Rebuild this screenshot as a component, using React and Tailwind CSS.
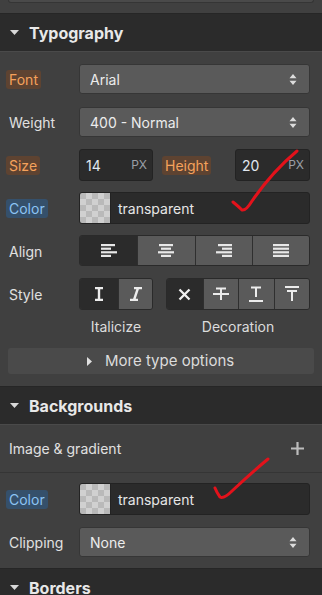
import React from "react";

const font = { fontFamily: "Inter, 'Noto Sans', sans-serif" };

function SectionHeader({ title }) {
  return (
    <div className="flex h-[39px] items-center gap-[10px] border-y border-t-[#262626] border-b-[#4a4a4a] bg-[#2b2b2b] pl-[10px]">
      <svg width="9" height="5" viewBox="0 0 9 5">
        <path d="M0 0h9L4.5 5z" fill="#d9d9d9" />
      </svg>
      <span className="text-[16px] font-bold text-[#e8e8e8]">{title}</span>
    </div>
  );
}

function Label({ children, tone }) {
  const toneClass =
    tone === "orange"
      ? "bg-[#5e4331] text-[#f5a25c]"
      : tone === "blue"
      ? "bg-[#35506b] text-[#8cc4f4]"
      : "text-[#e0e0e0]";
  return (
    <span className={`rounded-[3px] px-[3px] py-[1px] text-[14px] leading-[19px] ${toneClass}`}>
      {children}
    </span>
  );
}

function UpDown() {
  return (
    <svg width="8" height="11" viewBox="0 0 8 11">
      <path d="M4 0L7.5 4.2H0.5z M4 11L7.5 6.8H0.5z" fill="#dcdcdc" />
    </svg>
  );
}

function Select({ value }) {
  return (
    <div className="flex h-[30px] flex-1 items-center justify-between rounded-[3px] border border-[#363636] bg-[#5a5a5a] pl-[10px] pr-[12px] text-[14px] text-[#ececec]">
      <span>{value}</span>
      <UpDown />
    </div>
  );
}

function Row({ label, tone, children }) {
  return (
    <div className="flex items-center">
      <div className="w-[73px] shrink-0">
        <Label tone={tone}>{label}</Label>
      </div>
      {children}
    </div>
  );
}

function NumInput({ value, w }) {
  return (
    <div className={`flex h-[32px] ${w} items-center justify-between rounded-[3px] border border-[#232323] bg-[#2b2b2b] pl-[6px] pr-[5px]`}>
      <span className="text-[14px] text-[#e2e8f0]">{value}</span>
      <span className="text-[12px] text-[#9a9fa6]">PX</span>
    </div>
  );
}

function ColorField() {
  return (
    <div className="flex h-[32px] flex-1 items-center overflow-hidden rounded-[3px] border border-[#232323] bg-[#2b2b2b]">
      <div className="h-full w-[31px] border-r border-[#232323] bg-[repeating-conic-gradient(#d0d0d0_0_25%,#b9b9b9_0_50%)] bg-[length:12px_12px]" />
      <span className="pl-[7px] text-[14px] text-[#e6e6e6]">transparent</span>
    </div>
  );
}

function Lines({ rows }) {
  return (
    <svg width="16" height="14" viewBox="0 0 16 14">
      {rows.map(([x, w], i) => (
        <rect key={i} x={x} y={i * 3.6} width={w} height="2.2" fill="#e8e8e8" />
      ))}
    </svg>
  );
}

const alignIcons = [
  [[0, 14], [0, 10], [0, 16], [0, 10]],
  [[1, 14], [3, 10], [0, 16], [3, 10]],
  [[2, 14], [6, 10], [0, 16], [6, 10]],
  [[0, 16], [0, 16], [0, 16], [0, 16]],
];

function Seg({ active, children, className = "" }) {
  return (
    <div
      className={`flex h-full items-center justify-center border-l border-[#2f2f2f] first:border-l-0 ${
        active ? "bg-[#2b2b2b]" : "bg-[#5a5a5a]"
      } ${className}`}
    >
      {children}
    </div>
  );
}

function IconI() {
  return (
    <svg width="12" height="14" viewBox="0 0 12 14">
      <path d="M2 1h8M2 13h8M6 1v12" stroke="#ececec" strokeWidth="2.4" fill="none" />
    </svg>
  );
}

function IconItalic() {
  return (
    <svg width="14" height="14" viewBox="0 0 14 14">
      <path d="M5 1h8M1 13h8M9 1L5 13" stroke="#ececec" strokeWidth="2.4" fill="none" />
    </svg>
  );
}

function IconX() {
  return (
    <svg width="13" height="13" viewBox="0 0 13 13">
      <path d="M1.5 1.5l10 10M11.5 1.5l-10 10" stroke="#f0f0f0" strokeWidth="2.3" fill="none" />
    </svg>
  );
}

function IconStrike() {
  return (
    <svg width="16" height="14" viewBox="0 0 16 14">
      <path d="M3 1.5h10M8 1.5v11.5M0 7h16" stroke="#ececec" strokeWidth="2" fill="none" />
    </svg>
  );
}

function IconUnder() {
  return (
    <svg width="16" height="16" viewBox="0 0 16 16">
      <path d="M3 1.5h10M8 1.5v9.5M1 15h14" stroke="#ececec" strokeWidth="2" fill="none" />
    </svg>
  );
}

function IconOver() {
  return (
    <svg width="16" height="16" viewBox="0 0 16 16">
      <path d="M1 1h14M3 5h10M8 5v10" stroke="#ececec" strokeWidth="2" fill="none" />
    </svg>
  );
}

export default function App() {
  return (
    <div className="relative h-[595px] w-[322px] overflow-hidden bg-[#404040]" style={font}>
      <div className="mx-2 h-[3px] rounded-b-[3px] border-x border-b border-[#353535] bg-[#4a4a4a]" />
      <div className="h-[10px]" />
      <SectionHeader title="Typography" />

      <div className="flex flex-col pl-[6px] pr-[12px] pt-[12px]">
        <Row label="Font" tone="orange">
          <Select value="Arial" />
        </Row>
        <div className="mt-[13px]">
          <Row label="Weight">
            <Select value="400 - Normal" />
          </Row>
        </div>
        <div className="mt-[12px] flex items-center">
          <div className="w-[73px] shrink-0">
            <Label tone="orange">Size</Label>
          </div>
          <NumInput value="14" w="w-[74px]" />
          <div className="ml-[9px]">
            <Label tone="orange">Height</Label>
          </div>
          <div className="ml-auto">
            <NumInput value="20" w="w-[75px]" />
          </div>
        </div>
        <div className="mt-[11px]">
          <Row label="Color" tone="blue">
            <ColorField />
          </Row>
        </div>
        <div className="mt-[11px]">
          <Row label="Align">
            <div className="grid h-[31px] flex-1 grid-cols-4 overflow-hidden rounded-[3px] border border-[#2a2a2a]">
              {alignIcons.map((rows, i) => (
                <Seg key={i} active={i === 0}>
                  <Lines rows={rows} />
                </Seg>
              ))}
            </div>
          </Row>
        </div>
        <div className="mt-[12px]">
          <Row label="Style">
            <div className="flex h-[32px] w-[74px] overflow-hidden rounded-[3px] border border-[#2a2a2a]">
              <Seg active className="w-[38px]">
                <IconI />
              </Seg>
              <Seg className="flex-1">
                <IconItalic />
              </Seg>
            </div>
            <div className="ml-auto grid h-[32px] w-[144px] grid-cols-4 overflow-hidden rounded-[3px] border border-[#2a2a2a]">
              <Seg active>
                <IconX />
              </Seg>
              <Seg>
                <IconStrike />
              </Seg>
              <Seg>
                <IconUnder />
              </Seg>
              <Seg>
                <IconOver />
              </Seg>
            </div>
          </Row>
        </div>
        <div className="mt-[6px] flex text-[14px] text-[#dcdcdc]">
          <div className="w-[73px] shrink-0" />
          <div className="w-[74px] text-center">Italicize</div>
          <div className="ml-auto w-[144px] text-center">Decoration</div>
        </div>
      </div>

      <div className="mx-2 mt-[11px] flex h-[26px] items-center gap-[13px] rounded-[3px] bg-[#4a4a4a] pl-[79px] text-[15px] text-[#dcdcdc]">
        <svg width="5" height="9" viewBox="0 0 5 9">
          <path d="M0 0v9l5-4.5z" fill="#e0e0e0" />
        </svg>
        <span>More type options</span>
      </div>

      <div className="h-[12px]" />
      <SectionHeader title="Backgrounds" />

      <div className="flex h-[48px] items-center justify-between border-b border-[#353535] pl-[9px] pr-[18px]">
        <span className="text-[14px] text-[#e0e0e0]">Image &amp; gradient</span>
        <svg width="13" height="13" viewBox="0 0 13 13">
          <path d="M6.5 0v13M0 6.5h13" stroke="#bdbdbd" strokeWidth="2.2" />
        </svg>
      </div>

      <div className="flex flex-col pl-[6px] pr-[12px] pt-[10px]">
        <Row label="Color" tone="blue">
          <ColorField />
        </Row>
        <div className="mt-[12px]">
          <Row label="Clipping">
            <Select value="None" />
          </Row>
        </div>
      </div>

      <div className="h-[11px]" />
      <SectionHeader title="Borders" />

      <svg className="pointer-events-none absolute left-0 top-0" width="322" height="595" viewBox="0 0 322 595">
        <path
          d="M233 202 Q238 206 242 210 Q246 211 252 201 Q272 172 297 151"
          stroke="#e3121b"
          strokeWidth="3"
          fill="none"
          strokeLinecap="round"
        />
        <path
          d="M215 488 Q217 493 220 497 Q224 499 232 491 Q250 474 268 459"
          stroke="#e3121b"
          strokeWidth="3"
          fill="none"
          strokeLinecap="round"
        />
      </svg>
    </div>
  );
}
